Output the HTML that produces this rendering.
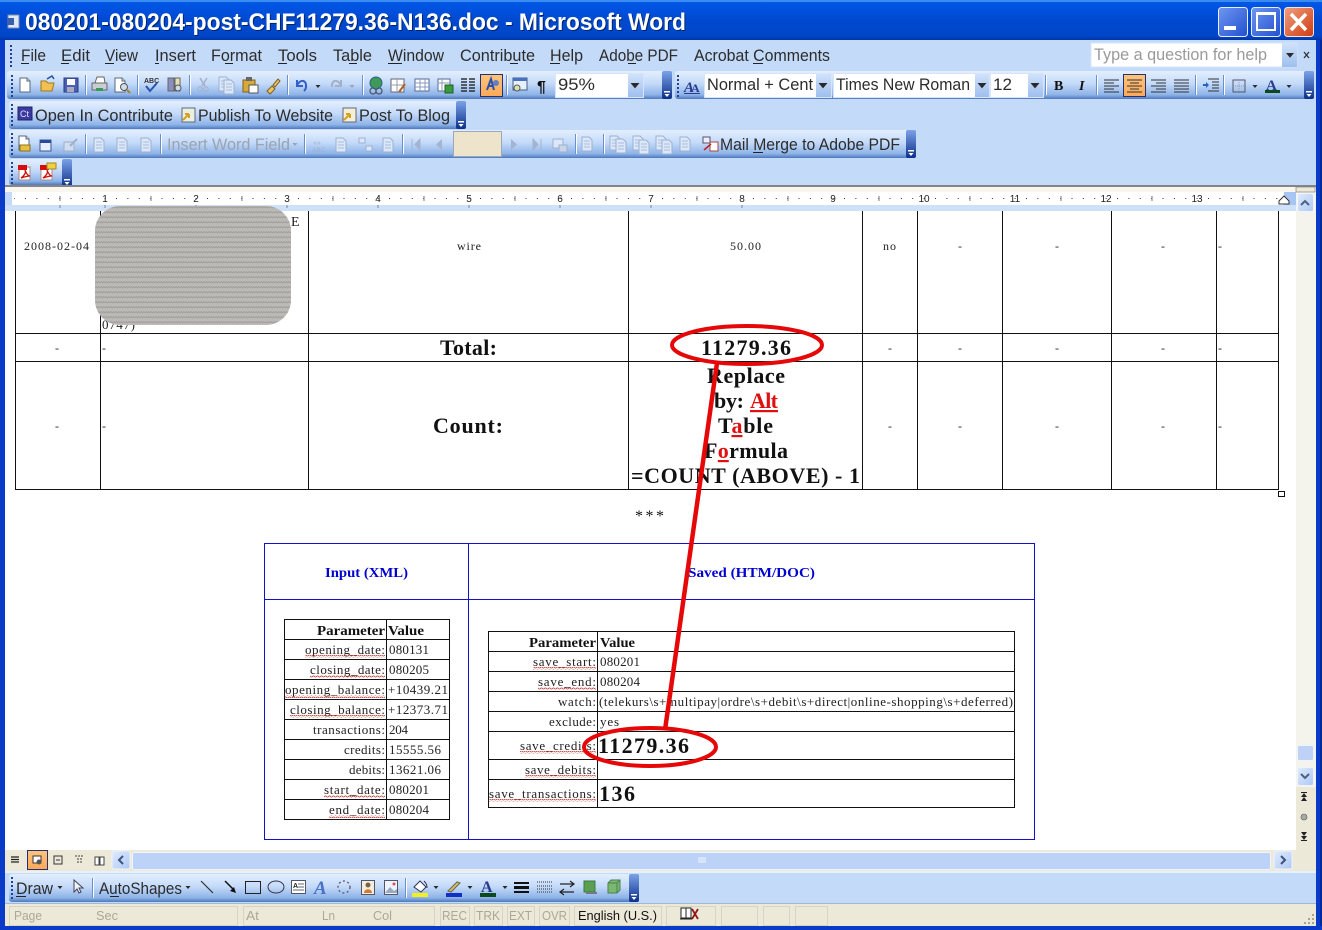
<!DOCTYPE html>
<html><head><meta charset="utf-8"><style>
html,body{margin:0;padding:0;background:#c3daf9;width:1322px;height:930px;overflow:hidden}
svg{display:block}
.u{font-family:"Liberation Sans",sans-serif;font-size:17px;fill:#2c2c2c}
.d{font-family:"Liberation Sans",sans-serif;font-size:17px;fill:#9aa3b0}
.st{font-family:"Liberation Sans",sans-serif;font-size:13px;fill:#aca899}
.s{font-family:"Liberation Serif",serif;font-size:13px;fill:#222}
.b{font-family:"Liberation Serif",serif;font-size:14px;font-weight:bold;fill:#111}
.h{font-family:"Liberation Serif",serif;font-size:22px;font-weight:bold;fill:#111}
.r{font-family:"Liberation Sans",sans-serif;font-size:10px;fill:#222}
</style></head><body>
<svg width="1322" height="930" viewBox="0 0 1322 930" xmlns="http://www.w3.org/2000/svg">
<defs>
<linearGradient id="tb" x1="0" y1="0" x2="0" y2="1"><stop offset="0" stop-color="#0a5ce0"/><stop offset=".12" stop-color="#0055e5"/><stop offset=".5" stop-color="#0049d0"/><stop offset=".9" stop-color="#0046c8"/><stop offset="1" stop-color="#0036a8"/></linearGradient>
<linearGradient id="bar" x1="0" y1="0" x2="0" y2="1"><stop offset="0" stop-color="#e3effe"/><stop offset=".45" stop-color="#c4daf9"/><stop offset=".85" stop-color="#8eb3e8"/><stop offset="1" stop-color="#4d78bd"/></linearGradient>
<linearGradient id="chev" x1="0" y1="0" x2="0" y2="1"><stop offset="0" stop-color="#7ba2e7"/><stop offset="1" stop-color="#0c2f8a"/></linearGradient>
<linearGradient id="drop" x1="0" y1="0" x2="0" y2="1"><stop offset="0" stop-color="#d0e2fb"/><stop offset="1" stop-color="#9ebfee"/></linearGradient>
<linearGradient id="or" x1="0" y1="0" x2="0" y2="1"><stop offset="0" stop-color="#fdc47c"/><stop offset="1" stop-color="#fda858"/></linearGradient>
<linearGradient id="minb" x1="0" y1="0" x2="1" y2="1"><stop offset="0" stop-color="#6f96f0"/><stop offset="1" stop-color="#2150d0"/></linearGradient>
<linearGradient id="closeb" x1="0" y1="0" x2="1" y2="1"><stop offset="0" stop-color="#f0a080"/><stop offset="1" stop-color="#d03a10"/></linearGradient>
<linearGradient id="sbb" x1="0" y1="0" x2="1" y2="1"><stop offset="0" stop-color="#e0ebfd"/><stop offset="1" stop-color="#aec8f4"/></linearGradient>
<pattern id="wave" width="4" height="3" patternUnits="userSpaceOnUse"><path d="M0 2 L1 1 L2 1 L3 2 L4 2" fill="none" stroke="#c8302a" stroke-width=".8"/></pattern>
<pattern id="zig" width="5" height="5" patternUnits="userSpaceOnUse"><path d="M0 3 L1.250 1.500 L2.500 3 L3.750 1.500 L5 3" fill="none" stroke="#a09e9b" stroke-width=".9"/></pattern>
<g id="dn"><path d="M-2.500 0h5l-2.500 3z" fill="#2a2a2a"/></g>
<g id="dnd"><path d="M-2.500 0h5l-2.500 3z" fill="#95a4bd"/></g>
<g id="cv"><rect x="0" y="0" width="10" height="28" rx="2" fill="url(#chev)"/><rect x="2" y="20" width="6" height="1.500" fill="#fff"/><path d="M2.500 23h5l-2.500 3z" fill="#fff"/></g>
<g id="grip" fill="#27418a"><rect x="0" y="0" width="2" height="2"/><rect x="0" y="4" width="2" height="2"/><rect x="0" y="8" width="2" height="2"/><rect x="0" y="12" width="2" height="2"/><rect x="0" y="16" width="2" height="2"/><rect x="0" y="20" width="2" height="2"/></g>
<g id="pg"><path d="M-5-7h7l3 3v11h-10z" fill="#fff" stroke="#5a6a80"/><path d="M2-7v3h3" fill="#d8e2f0" stroke="#5a6a80"/></g>
<g id="pgd"><path d="M-5-7h7l3 3v11h-10z" fill="#dce8fa" stroke="#9db1d0"/><path d="M-3-3h6M-3 0h6M-3 3h6" stroke="#a9bcd8"/></g>
<g id="sep"><rect x="0" y="0" width="1" height="20" fill="#6b8fc9"/><rect x="1" y="0" width="1" height="20" fill="#fff"/></g>
<g id="pdf"><path d="M-6-6h11v13h-11z" fill="#fff" stroke="#a88"/><rect x="-7" y="-8" width="9" height="5" fill="#d80c0c"/><path d="M-4 5C0 2 1-1 0-3 1 0 3 3 5 3 2 3-1 4-4 5z" fill="none" stroke="#d01010" stroke-width="1.300"/></g>
</defs>

<!-- base -->
<rect width="1322" height="930" fill="#c3daf9"/>
<!-- title bar -->
<rect width="1322" height="40" fill="url(#tb)"/>
<rect x="0" y="0" width="1322" height="2" fill="#3a8cf0"/>
<rect x="8" y="15" width="11" height="13" fill="#dfe8f5" stroke="#7a8fb0"/><rect x="7" y="18" width="7" height="7" fill="#3b5fb0"/>
<text x="26" y="31" font-family="Liberation Sans,sans-serif" font-weight="bold" font-size="24" fill="#000" opacity=".5" textLength="661" lengthAdjust="spacingAndGlyphs">080201-080204-post-CHF11279.36-N136.doc - Microsoft Word</text>
<text x="25" y="30" font-family="Liberation Sans,sans-serif" font-weight="bold" font-size="24" fill="#fff" textLength="661" lengthAdjust="spacingAndGlyphs">080201-080204-post-CHF11279.36-N136.doc - Microsoft Word</text>
<rect x="1218.500" y="7.500" width="29" height="29" rx="3" fill="url(#minb)" stroke="#e8eefc"/><rect x="1224" y="26" width="12" height="4" fill="#fff"/>
<rect x="1251.500" y="7.500" width="29" height="29" rx="3" fill="url(#minb)" stroke="#e8eefc"/><rect x="1257" y="13" width="18" height="17" fill="none" stroke="#fff" stroke-width="2"/><rect x="1257" y="12" width="18" height="3" fill="#fff"/>
<rect x="1284.500" y="7.500" width="29" height="29" rx="3" fill="url(#closeb)" stroke="#f4e4dc"/><path d="M1291 14l15 16M1306 14l-15 16" stroke="#fff" stroke-width="3.500"/>
<rect x="0" y="40" width="5" height="890" fill="#0a3bc8"/><rect x="1316" y="40" width="6" height="890" fill="#0a3bc8"/>
<rect x="1320" y="40" width="2" height="890" fill="#002a9a"/>

<!-- menu bar -->
<use href="#grip" x="10" y="45"/>
<g class="u">
<text x="21" y="61" textLength="25" lengthAdjust="spacingAndGlyphs">File</text>
<text x="61" y="61" textLength="29" lengthAdjust="spacingAndGlyphs">Edit</text>
<text x="105" y="61" textLength="33" lengthAdjust="spacingAndGlyphs">View</text>
<text x="155" y="61" textLength="41" lengthAdjust="spacingAndGlyphs">Insert</text>
<text x="211" y="61" textLength="51" lengthAdjust="spacingAndGlyphs">Format</text>
<text x="278" y="61" textLength="39" lengthAdjust="spacingAndGlyphs">Tools</text>
<text x="333" y="61" textLength="39" lengthAdjust="spacingAndGlyphs">Table</text>
<text x="388" y="61" textLength="56" lengthAdjust="spacingAndGlyphs">Window</text>
<text x="460" y="61" textLength="75" lengthAdjust="spacingAndGlyphs">Contribute</text>
<text x="550" y="61" textLength="33" lengthAdjust="spacingAndGlyphs">Help</text>
<text x="599" y="61" textLength="79" lengthAdjust="spacingAndGlyphs">Adobe PDF</text>
<text x="694" y="61" textLength="136" lengthAdjust="spacingAndGlyphs">Acrobat Comments</text>
</g>
<g fill="#222"><rect x="21" y="63" width="8" height="1"/><rect x="61" y="63" width="8" height="1"/><rect x="105" y="63" width="9" height="1"/><rect x="155" y="63" width="4" height="1"/><rect x="225" y="63" width="8" height="1"/><rect x="278" y="63" width="9" height="1"/><rect x="349" y="63" width="8" height="1"/><rect x="388" y="63" width="14" height="1"/><rect x="510" y="63" width="8" height="1"/><rect x="550" y="63" width="10" height="1"/><rect x="628" y="63" width="8" height="1"/><rect x="753" y="63" width="10" height="1"/></g>
<rect x="1091" y="43" width="206" height="24" fill="#fff" stroke="#d6e5fb"/>
<text class="u" x="1094" y="60" style="fill:#9a9a9a" textLength="173" lengthAdjust="spacingAndGlyphs">Type a question for help</text>
<rect x="1282" y="43" width="15" height="24" fill="url(#drop)"/><use href="#dn" transform="translate(1290 53) scale(1.600)"/>
<path d="M1304 52l5 6M1309 52l-5 6" stroke="#333" stroke-width="1.300"/>

<!-- toolbars -->
<rect x="7" y="71" width="665" height="28" rx="3" fill="url(#bar)"/>
<rect x="675" y="71" width="639" height="28" rx="3" fill="url(#bar)"/>
<rect x="9" y="101" width="457" height="28" rx="3" fill="url(#bar)"/>
<rect x="9" y="130" width="907" height="28" rx="3" fill="url(#bar)"/>
<rect x="9" y="159" width="63" height="26" rx="3" fill="url(#bar)"/>
<use href="#cv" x="662" y="71"/><use href="#cv" x="1304" y="71"/><use href="#cv" x="456" y="101"/><use href="#cv" x="906" y="130"/><use href="#cv" x="62" y="159" />
<use href="#grip" x="11" y="75"/><use href="#grip" x="677" y="75"/><use href="#grip" x="11" y="104"/><use href="#grip" x="11" y="133"/><use href="#grip" x="11" y="162"/>

<!-- row 1 icons -->
<use href="#pg" x="25" y="85"/>
<path d="M41 91V81h5l2 2h6l-2 8z" fill="#f0c050" stroke="#a07820"/><path d="M47 79l5-3 2 3" fill="none" stroke="#2050a0" stroke-width="1.500"/>
<rect x="64" y="78" width="14" height="14" fill="#4a60b8" stroke="#2a3a80"/><rect x="67" y="79" width="8" height="6" fill="#fff"/><rect x="67" y="87" width="7" height="5" fill="#aab"/>
<use href="#sep" x="85" y="75"/>
<rect x="92" y="83" width="15" height="7" fill="#c8ccd4" stroke="#666"/><path d="M95 83l2-6h7l1 6z" fill="#fff" stroke="#666"/><rect x="96" y="88" width="7" height="3" fill="#3a9a50"/>
<use href="#pg" x="120" y="85"/><circle cx="124" cy="87" r="3.500" fill="#cde" stroke="#555"/><path d="M127 90l3 3" stroke="#b08020" stroke-width="2"/>
<use href="#sep" x="137" y="75"/>
<text x="144" y="83" font-family="Liberation Sans,sans-serif" font-size="7" font-weight="bold" fill="#333">ABC</text><path d="M146 86l4 5 7-8" fill="none" stroke="#2a50b0" stroke-width="2"/>
<rect x="168" y="78" width="6" height="13" fill="#8a8fc0" stroke="#666"/><rect x="175" y="78" width="5" height="13" fill="#e8e0b0" stroke="#666"/><circle cx="178" cy="88" r="3" fill="#cde" stroke="#555"/>
<use href="#sep" x="189" y="75"/>
<path d="M200 78l5 8M207 78l-5 8" stroke="#a2b0c8" stroke-width="1.500"/><circle cx="200" cy="89" r="2.200" fill="none" stroke="#a2b0c8"/><circle cx="206" cy="89" r="2.200" fill="none" stroke="#a2b0c8"/>
<use href="#pgd" x="224" y="84"/><use href="#pgd" x="229" y="87"/>
<rect x="243" y="80" width="12" height="12" fill="#d8a838" stroke="#806020"/><rect x="246" y="77" width="6" height="4" fill="#666"/><rect x="249" y="85" width="9" height="8" fill="#fff" stroke="#555"/>
<path d="M267 91l5-5 3 3-5 5zM273 85l5-6 2 2-5 6z" fill="#e8c860" stroke="#806020"/>
<use href="#sep" x="287" y="75"/>
<path d="M297 80v6h6M297 86c2-7 10-7 9 1 0 2-1 3-2 4" fill="none" stroke="#3560c8" stroke-width="2"/><use href="#dn" x="318" y="85"/>
<path d="M341 80v6h-6M341 86c-2-7-10-7-9 1" fill="none" stroke="#a2b0c8" stroke-width="2"/><use href="#dnd" x="352" y="85"/>
<use href="#sep" x="362" y="75"/>
<circle cx="376" cy="83" r="6" fill="#3f9a5a" stroke="#27608a"/><path d="M370 91a3 3 0 0 1 6 0a3 3 0 0 1-6 0M376 91a3 3 0 0 1 6 0a3 3 0 0 1-6 0" fill="none" stroke="#4a5a70" stroke-width="1.300"/>
<rect x="391" y="79" width="13" height="13" fill="#fff" stroke="#667"/><path d="M397 79v13M391 85h13" stroke="#99a"/><path d="M399 92l6-8" stroke="#b06020" stroke-width="2"/>
<rect x="415" y="79" width="14" height="12" fill="#fff" stroke="#5a6a90"/><path d="M415 83h14M415 87h14M420 79v12M425 79v12" stroke="#8a9ac0"/>
<rect x="438" y="79" width="12" height="12" fill="#fff" stroke="#5a6a90"/><path d="M438 83h12M442 79v12" stroke="#8a9ac0"/><rect x="445" y="85" width="8" height="8" fill="#3a9a40" stroke="#206020"/>
<path d="M461 79h6M469 79h6M461 82h6M469 82h6M461 85h6M469 85h6M461 88h6M469 88h6M461 91h6M469 91h6" stroke="#111" stroke-width="1.200"/>
<rect x="480.500" y="74.500" width="22" height="22" fill="url(#or)" stroke="#27306e"/><path d="M487 90l4-11 3 11M488 86h5" fill="none" stroke="#2a50b0" stroke-width="2"/><circle cx="496" cy="83" r="3" fill="#6080c0"/>
<use href="#sep" x="506" y="75"/>
<rect x="513" y="78" width="14" height="12" fill="#e8f0fc" stroke="#40608a"/><rect x="513" y="78" width="14" height="3" fill="#4a70c0"/><circle cx="517" cy="88" r="3" fill="#d8e8a0" stroke="#556"/>
<text x="537" y="92" font-family="Liberation Sans,sans-serif" font-size="16" font-weight="bold" fill="#111">¶</text>
<rect x="555.500" y="73.500" width="88" height="24" fill="#fff" stroke="#d6e5fb"/><rect x="628" y="74" width="15" height="23" fill="url(#drop)"/><use href="#dn" transform="translate(635 83) scale(1.800)"/>
<text class="u" x="558" y="90" textLength="37" lengthAdjust="spacingAndGlyphs">95%</text>

<!-- row 1 right -->
<text x="684" y="92" font-family="Liberation Serif,serif" font-size="15" font-style="italic" font-weight="bold" fill="#2a3a90">A</text><text x="691" y="92" font-family="Liberation Serif,serif" font-size="12" font-weight="bold" fill="#2a3a90">A</text><rect x="684" y="93" width="16" height="1" fill="#2a3a90"/>
<rect x="704.500" y="73.500" width="127" height="24" fill="#fff" stroke="#d6e5fb"/><rect x="816" y="74" width="15" height="23" fill="url(#drop)"/><use href="#dn" transform="translate(823 83) scale(1.800)"/>
<text class="u" x="707" y="90" textLength="106" lengthAdjust="spacingAndGlyphs">Normal + Cent</text>
<rect x="833.500" y="73.500" width="156" height="24" fill="#fff" stroke="#d6e5fb"/><rect x="975" y="74" width="14" height="23" fill="url(#drop)"/><use href="#dn" transform="translate(982 83) scale(1.800)"/>
<text class="u" x="836" y="90" textLength="134" lengthAdjust="spacingAndGlyphs">Times New Roman</text>
<rect x="990.500" y="73.500" width="53" height="24" fill="#fff" stroke="#d6e5fb"/><rect x="1028" y="74" width="15" height="23" fill="url(#drop)"/><use href="#dn" transform="translate(1035 83) scale(1.800)"/>
<text class="u" x="993" y="90" textLength="19" lengthAdjust="spacingAndGlyphs">12</text>
<use href="#sep" x="1045" y="75"/>
<text x="1054" y="90" font-family="Liberation Serif,serif" font-size="14" font-weight="bold" fill="#111">B</text>
<text x="1079" y="90" font-family="Liberation Serif,serif" font-size="14" font-weight="bold" font-style="italic" fill="#111">I</text>
<use href="#sep" x="1096" y="75"/>
<path d="M1104 80h15M1104 83h10M1104 86h15M1104 89h10M1104 92h15" stroke="#333"/>
<rect x="1123.500" y="74.500" width="22" height="22" fill="url(#or)" stroke="#27306e"/>
<path d="M1127 80h15M1130 83h9M1127 86h15M1130 89h9M1127 92h15" stroke="#333"/>
<path d="M1151 80h15M1156 83h10M1151 86h15M1156 89h10M1151 92h15" stroke="#333"/>
<path d="M1174 80h15M1174 83h15M1174 86h15M1174 89h15M1174 92h15" stroke="#333"/>
<use href="#sep" x="1195" y="75"/>
<path d="M1208 79h11M1212 82h7M1212 85h7M1212 88h7M1208 91h11" stroke="#333"/><path d="M1203 85h5" stroke="#2a60c0" stroke-width="2"/><path d="M1206 82l3 3-3 3z" fill="#2a60c0"/>
<use href="#sep" x="1223" y="75"/>
<rect x="1233" y="80" width="12" height="12" fill="none" stroke="#556"/><path d="M1239 80v12M1233 86h12" stroke="#99a" stroke-dasharray="1 1"/><use href="#dn" x="1255" y="85"/>
<text x="1266" y="90" font-family="Liberation Serif,serif" font-size="15" font-weight="bold" fill="#2a3a90">A</text><rect x="1265" y="90" width="15" height="3" fill="#0c4a1c"/><use href="#dn" x="1289" y="85"/>

<!-- row 2 -->
<rect x="18" y="107" width="14" height="13" fill="#3a3aa0" stroke="#22226a"/><text x="20" y="117" font-family="Liberation Sans,sans-serif" font-size="9" fill="#dfe4ff">Ct</text>
<text class="u" x="35" y="121" textLength="138" lengthAdjust="spacingAndGlyphs">Open In Contribute</text>
<rect x="182" y="108" width="13" height="14" fill="#e8f0e0" stroke="#667"/><path d="M183 120l6-6M189 114v4M189 114h-4" stroke="#d8a020" stroke-width="2" fill="none"/>
<text class="u" x="198" y="121" textLength="135" lengthAdjust="spacingAndGlyphs">Publish To Website</text>
<rect x="343" y="108" width="13" height="14" fill="#f4f0d8" stroke="#667"/><path d="M344 120l6-6M350 114v4M350 114h-4" stroke="#d8a020" stroke-width="2" fill="none"/>
<text class="u" x="359" y="121" textLength="91" lengthAdjust="spacingAndGlyphs">Post To Blog</text>

<!-- row 3 -->
<use href="#pg" x="24" y="143"/><path d="M20 151v-6h10v6z" fill="#e8c040" stroke="#907020"/>
<rect x="40" y="140" width="11" height="11" fill="#e8eefc" stroke="#3a5a9a"/><rect x="40" y="140" width="11" height="3" fill="#2a4a9a"/>
<rect x="64" y="142" width="10" height="9" fill="#d0dcf0" stroke="#a0b0c8"/><path d="M70 146l7-7" stroke="#a2b0c8" stroke-width="2"/>
<use href="#sep" x="85" y="134"/><use href="#pgd" x="99" y="145"/><use href="#pgd" x="122" y="145"/><use href="#pgd" x="146" y="145"/><use href="#sep" x="160" y="134"/>
<text class="d" x="167" y="150" textLength="123" lengthAdjust="spacingAndGlyphs">Insert Word Field</text><use href="#dnd" x="295" y="143"/>
<use href="#sep" x="304" y="134"/>
<text x="312" y="152" font-family="Liberation Sans,sans-serif" font-size="6.500" fill="#9cafcc">ABC</text><text x="313" y="145" font-family="Liberation Sans,sans-serif" font-size="7" fill="#9cafcc">«»</text>
<use href="#pgd" x="341" y="145"/>
<rect x="359" y="138" width="6" height="5" fill="#dce8fa" stroke="#9db1d0"/><rect x="366" y="146" width="6" height="5" fill="#dce8fa" stroke="#9db1d0"/>
<use href="#pgd" x="388" y="145"/><use href="#sep" x="402" y="134"/>
<path d="M412 139v11M415 144.500l5-5.500v11z" fill="#a2b4d0" stroke="#a2b4d0"/><path d="M436 144.500l6-5.500v11z" fill="#a2b4d0"/>
<rect x="453.500" y="131.500" width="48" height="25" fill="#eee3cb" stroke="#9ba8bc"/>
<path d="M511 139l6 5.500-6 5.500z" fill="#a2b4d0"/><path d="M533 139l5 5.500-5 5.500zM541 139v11" fill="#a2b4d0" stroke="#a2b4d0"/>
<rect x="553" y="139" width="10" height="9" fill="#dce8fa" stroke="#9db1d0"/><rect x="559" y="145" width="8" height="7" fill="#c8d4e8" stroke="#9db1d0"/>
<use href="#sep" x="575" y="134"/><use href="#pgd" x="587" y="144"/><use href="#sep" x="603" y="134"/>
<use href="#pgd" x="615" y="143"/><use href="#pgd" x="621" y="146"/><use href="#pgd" x="638" y="143"/><use href="#pgd" x="644" y="147"/><use href="#pgd" x="661" y="143"/><use href="#pgd" x="667" y="147"/><use href="#pgd" x="685" y="144"/>
<rect x="703" y="137" width="7" height="6" fill="#eef" stroke="#556"/><rect x="710" y="142" width="8" height="9" fill="#fff" stroke="#a44"/><path d="M704 150l7-6" stroke="#c02020" stroke-width="1.500"/>
<text class="u" x="720" y="150" textLength="180" lengthAdjust="spacingAndGlyphs">Mail Merge to Adobe PDF</text>
<rect x="753" y="152" width="10" height="1" fill="#222"/>

<!-- row 4 -->
<use href="#pdf" x="25" y="173"/><use href="#pdf" x="47" y="173"/><rect x="47" y="163" width="9" height="6" fill="#f0d040" stroke="#a08820"/>

<!-- separator + ruler -->
<rect x="5" y="185" width="1311" height="2" fill="#858585"/>
<rect x="5" y="187" width="1311" height="5" fill="#f8f6ee"/>
<rect x="5" y="192" width="7" height="19" fill="#c3daf9"/>
<rect x="12" y="192" width="1272" height="13" fill="#fff"/>
<rect x="5" y="205" width="1291" height="6" fill="#cfe0f9"/>
<rect x="1284" y="192" width="12" height="13" fill="#a6c5f2"/>
<g class="r" text-anchor="middle"><text x="105" y="202">1</text><text x="196" y="202">2</text><text x="287" y="202">3</text><text x="378" y="202">4</text><text x="469" y="202">5</text><text x="560" y="202">6</text><text x="651" y="202">7</text><text x="742" y="202">8</text><text x="833" y="202">9</text><text x="924" y="202">10</text><text x="1015" y="202">11</text><text x="1106" y="202">12</text><text x="1197" y="202">13</text></g>
<path d="M14 198.500H1282" stroke="#333" stroke-width="1" stroke-dasharray="1 10.375" stroke-dashoffset="-11"/>
<path d="M60 196v5M151 196v5M242 196v5M333 196v5M424 196v5M515 196v5M606 196v5M697 196v5M788 196v5M879 196v5M970 196v5M1061 196v5M1152 196v5M1243 196v5" stroke="#777"/>
<path d="M1279 204v-3l5-5 5 5v3z" fill="#fff" stroke="#333"/>
<path d="M60 205v3M105 205v3M196 205v3M287 205v3M378 205v3M469 205v3M560 205v3M651 205v3M742 205v3" stroke="#789"/>

<!-- document -->
<rect x="5" y="211" width="1291" height="639" fill="#fff"/>
<g stroke="#111" stroke-width="1" fill="none">
<path d="M15.500 211V489.500H1278.500V211"/>
<path d="M15 333.500H1279M15 361.500H1279"/>
<path d="M100.500 211V489M308.500 211V489M628.500 211V489M862.500 211V489M917.500 211V489M1002.500 211V489M1111.500 211V489M1216.500 211V489"/>
</g>
<rect x="1278.500" y="491.500" width="6" height="5" fill="#fff" stroke="#111"/>
<g class="s" style="font-size:12px">
<text x="24" y="250" textLength="65" lengthAdjust="spacing">2008-02-04</text>
<text x="457" y="250" textLength="24" lengthAdjust="spacing">wire</text>
<text x="730" y="250" textLength="31" lengthAdjust="spacing">50.00</text>
<text x="883" y="250" textLength="13" lengthAdjust="spacing">no</text>
<text x="958" y="250">-</text><text x="1055" y="250">-</text><text x="1161" y="250">-</text><text x="1218" y="250">-</text>
<text x="55" y="352">-</text><text x="102" y="352">-</text><text x="888" y="352">-</text><text x="958" y="352">-</text><text x="1055" y="352">-</text><text x="1161" y="352">-</text><text x="1218" y="352">-</text>
<text x="55" y="430">-</text><text x="102" y="430">-</text><text x="888" y="430">-</text><text x="958" y="430">-</text><text x="1055" y="430">-</text><text x="1161" y="430">-</text><text x="1218" y="430">-</text>
<text x="291" y="226" style="font-size:14px">E</text>
<text x="102" y="329" textLength="33" lengthAdjust="spacing" style="font-size:13px">0747)</text>
</g>
<g class="h">
<text x="440" y="355" textLength="57" lengthAdjust="spacing">Total:</text>
<text x="701" y="355" textLength="90" lengthAdjust="spacing">11279.36</text>
<text x="433" y="433" textLength="70" lengthAdjust="spacing">Count:</text>
<text x="707" y="383" textLength="78" lengthAdjust="spacing">Replace</text>
<text x="714" y="408" textLength="30" lengthAdjust="spacing">by:</text>
<text x="750" y="408" textLength="28" lengthAdjust="spacing" style="fill:#e01010;text-decoration:underline">Alt</text>
<text x="718" y="433" textLength="55" lengthAdjust="spacing">T<tspan fill="#e01010" text-decoration="underline">a</tspan>ble</text>
<text x="704" y="458" textLength="84" lengthAdjust="spacing">F<tspan fill="#e01010" text-decoration="underline">o</tspan>rmula</text>
<text x="631" y="483" textLength="229" lengthAdjust="spacing">=COUNT (ABOVE) - 1</text>
<text x="635" y="521" textLength="29" lengthAdjust="spacing" style="font-size:16px;font-weight:normal">* * *</text>
</g>
<rect x="95" y="206" width="196" height="119" rx="25" fill="#bcbab7"/>
<rect x="95" y="206" width="196" height="119" rx="25" fill="url(#zig)"/>

<!-- blue table -->
<g stroke="#1111c8" fill="none"><rect x="264.500" y="543.500" width="770" height="296"/><path d="M264 599.500H1034M468.500 543V839"/></g>
<text class="b" x="325" y="577" style="fill:#0000d0" textLength="83" lengthAdjust="spacingAndGlyphs">Input (XML)</text>
<text class="b" x="688" y="577" style="fill:#0000d0" textLength="127" lengthAdjust="spacingAndGlyphs">Saved (HTM/DOC)</text>

<!-- param table 1 -->
<g stroke="#111" fill="none"><rect x="284.500" y="619.500" width="165" height="200"/><path d="M386.500 619V819M284 639.500H449M284 659.500H449M284 679.500H449M284 699.500H449M284 719.500H449M284 739.500H449M284 759.500H449M284 779.500H449M284 799.500H449"/></g>
<text class="b" x="317" y="635" textLength="68" lengthAdjust="spacingAndGlyphs">Parameter</text><text class="b" x="388" y="635" textLength="36" lengthAdjust="spacingAndGlyphs">Value</text>
<g class="s">
<text x="305" y="654" textLength="80" lengthAdjust="spacing">opening_date:</text><text x="389" y="654" textLength="40" lengthAdjust="spacing">080131</text>
<text x="310" y="674" textLength="75" lengthAdjust="spacing">closing_date:</text><text x="389" y="674" textLength="40" lengthAdjust="spacing">080205</text>
<text x="285" y="694" textLength="100" lengthAdjust="spacing">opening_balance:</text><text x="388" y="694" textLength="60" lengthAdjust="spacing">+10439.21</text>
<text x="290" y="714" textLength="95" lengthAdjust="spacing">closing_balance:</text><text x="388" y="714" textLength="60" lengthAdjust="spacing">+12373.71</text>
<text x="313" y="734" textLength="72" lengthAdjust="spacing">transactions:</text><text x="389" y="734" textLength="19" lengthAdjust="spacing">204</text>
<text x="344" y="754" textLength="41" lengthAdjust="spacing">credits:</text><text x="389" y="754" textLength="52" lengthAdjust="spacing">15555.56</text>
<text x="349" y="774" textLength="36" lengthAdjust="spacing">debits:</text><text x="389" y="774" textLength="52" lengthAdjust="spacing">13621.06</text>
<text x="324" y="794" textLength="61" lengthAdjust="spacing">start_date:</text><text x="389" y="794" textLength="40" lengthAdjust="spacing">080201</text>
<text x="329" y="814" textLength="56" lengthAdjust="spacing">end_date:</text><text x="389" y="814" textLength="40" lengthAdjust="spacing">080204</text>
</g>
<g fill="url(#wave)"><rect x="305" y="655" width="80" height="3"/><rect x="310" y="675" width="75" height="3"/><rect x="285" y="695" width="100" height="3"/><rect x="290" y="715" width="95" height="3"/><rect x="324" y="795" width="61" height="3"/><rect x="329" y="815" width="56" height="3"/></g>

<!-- param table 2 -->
<g stroke="#111" fill="none"><rect x="488.500" y="631.500" width="526" height="176"/><path d="M597.500 631V807M488 651.500H1014M488 671.500H1014M488 691.500H1014M488 711.500H1014M488 731.500H1014M488 759.500H1014M488 779.500H1014"/></g>
<text class="b" x="529" y="647" textLength="67" lengthAdjust="spacingAndGlyphs">Parameter</text><text class="b" x="600" y="647" textLength="35" lengthAdjust="spacingAndGlyphs">Value</text>
<g class="s">
<text x="533" y="666" textLength="63" lengthAdjust="spacing">save_start:</text><text x="600" y="666" textLength="40" lengthAdjust="spacing">080201</text>
<text x="538" y="686" textLength="58" lengthAdjust="spacing">save_end:</text><text x="600" y="686" textLength="40" lengthAdjust="spacing">080204</text>
<text x="558" y="706" textLength="38" lengthAdjust="spacing">watch:</text><text x="599" y="706" textLength="414" lengthAdjust="spacing">(telekurs\s+multipay|ordre\s+debit\s+direct|online-shopping\s+deferred)</text>
<text x="549" y="726" textLength="47" lengthAdjust="spacing">exclude:</text><text x="600" y="726" textLength="19" lengthAdjust="spacing">yes</text>
<text x="520" y="750" textLength="76" lengthAdjust="spacing">save_credits:</text>
<text x="525" y="774" textLength="71" lengthAdjust="spacing">save_debits:</text>
<text x="489" y="798" textLength="107" lengthAdjust="spacing">save_transactions:</text>
</g>
<g fill="url(#wave)"><rect x="533" y="667" width="63" height="3"/><rect x="538" y="687" width="58" height="3"/><rect x="520" y="751" width="76" height="3"/><rect x="525" y="775" width="71" height="3"/><rect x="489" y="799" width="107" height="3"/></g>
<text class="h" x="598" y="753" textLength="91" lengthAdjust="spacing">11279.36</text>
<text class="h" x="599" y="801" textLength="36" lengthAdjust="spacing">136</text>

<!-- red annotations -->
<g fill="none" stroke="#e60808">
<ellipse cx="747" cy="345" rx="75" ry="19" stroke-width="4"/>
<ellipse cx="650" cy="747" rx="66" ry="19" stroke-width="4"/>
<path d="M717 363L665 730" stroke-width="4.500"/>
</g>

<!-- vertical scrollbar -->
<rect x="1296" y="187" width="20" height="600" fill="#f4f3ec"/>
<rect x="1296" y="187" width="19" height="5" fill="#ece9d8" stroke="#777" stroke-width=".6"/>
<rect x="1297.500" y="193.500" width="16" height="18" rx="2" fill="url(#sbb)" stroke="#f0f4fc"/><path d="M1301 205l4-4 4 4" fill="none" stroke="#4d6185" stroke-width="2"/>
<rect x="1297.500" y="745.500" width="16" height="15" rx="2" fill="#bdd2f6" stroke="#eef3fc"/>
<rect x="1297.500" y="767.500" width="16" height="18" rx="2" fill="url(#sbb)" stroke="#f0f4fc"/><path d="M1301 774l4 4 4-4" fill="none" stroke="#4d6185" stroke-width="2"/>
<rect x="1296" y="787" width="20" height="65" fill="#ece9d8"/>
<path d="M1304 793l-3 4h6zM1304 797l-3 4h6z" fill="#222" stroke="none"/><rect x="1301" y="792" width="6" height="1" fill="#222"/>
<circle cx="1304" cy="817" r="3" fill="#aaa" stroke="#555" stroke-width=".6"/>
<path d="M1301 832l3 4 3-4zM1301 836l3 4 3-4z" fill="#222"/><rect x="1301" y="840" width="6" height="1" fill="#222"/>

<!-- horizontal scrollbar -->
<rect x="5" y="850" width="1311" height="21" fill="#ece9d8"/>
<g fill="none" stroke="#222"><path d="M11 857h8M11 859.500h8M11 862h8" stroke-width="1.200"/></g>
<rect x="27.500" y="850.500" width="20" height="19" fill="url(#or)" stroke="#27306e"/><rect x="33" y="856" width="8" height="7" fill="#fff" stroke="#333"/><circle cx="39" cy="862" r="2.500" fill="#555"/>
<rect x="54" y="856" width="8" height="8" fill="none" stroke="#333"/><path d="M56 860h4" stroke="#333"/>
<path d="M75 856h8M77 859h6M77 862h6" stroke="#444" stroke-dasharray="2 1"/>
<path d="M95 857h4v8h-4zM100 857h4v8h-4z" fill="#fff" stroke="#444"/>
<rect x="112" y="851" width="18" height="18" rx="2" fill="url(#sbb)" stroke="#f0f4fc"/><path d="M123 856l-4 4 4 4" fill="none" stroke="#3c5480" stroke-width="2"/>
<rect x="132.500" y="852.500" width="1138" height="17" rx="2" fill="#bdd2f7" stroke="#f0f4fc"/>
<path d="M699 857v6M701 857v6M703 857v6M705 857v6" stroke="#f0f4fc"/>
<rect x="1274" y="851" width="18" height="18" rx="2" fill="url(#sbb)" stroke="#f0f4fc"/><path d="M1281 856l4 4-4 4" fill="none" stroke="#3c5480" stroke-width="2"/>
<rect x="5" y="871" width="1311" height="2" fill="#e8f0fc"/>
<rect x="5" y="873" width="1311" height="30" fill="#c3daf9"/>

<!-- draw toolbar -->
<rect x="9" y="874" width="630" height="28" rx="3" fill="url(#bar)"/>
<use href="#cv" x="629" y="874"/><use href="#grip" x="11" y="877"/>
<text class="u" x="16" y="894" textLength="37" lengthAdjust="spacingAndGlyphs">Draw</text><rect x="16" y="896" width="10" height="1" fill="#222"/><use href="#dn" x="60" y="886"/>
<path d="M74 880v12l3-3 2 4 2-1-2-4h4z" fill="#eef3fb" stroke="#445"/>
<use href="#sep" x="92" y="878"/>
<text class="u" x="99" y="894" textLength="83" lengthAdjust="spacingAndGlyphs">AutoShapes</text><rect x="110" y="896" width="9" height="1" fill="#222"/><use href="#dn" x="188" y="886"/>
<path d="M201 881l12 12" stroke="#333" stroke-width="1.200"/>
<path d="M225 881l9 9" stroke="#111" stroke-width="1.500"/><path d="M236 893l-6-2 4-4z" fill="#111"/>
<rect x="245.500" y="881.500" width="15" height="12" fill="none" stroke="#222"/>
<ellipse cx="276" cy="887" rx="8" ry="6" fill="none" stroke="#334"/>
<rect x="291.500" y="880.500" width="14" height="13" fill="#fff" stroke="#556"/><path d="M298 884h6M298 887h6M293 890h11" stroke="#667"/><text x="293" y="888" font-family="Liberation Sans,sans-serif" font-size="7" font-weight="bold" fill="#222">A</text>
<text x="314" y="894" font-family="Liberation Serif,serif" font-size="19" font-weight="bold" font-style="italic" fill="#4a70c8">A</text>
<circle cx="344" cy="887" r="6" fill="none" stroke="#667" stroke-dasharray="2 2.500" stroke-width="1.500"/>
<rect x="361.500" y="880.500" width="13" height="14" fill="#f0eee0" stroke="#556"/><circle cx="368" cy="885" r="2.500" fill="#806040"/><path d="M364 893c0-5 8-5 8 0" fill="#d87830"/>
<rect x="384.500" y="880.500" width="13" height="14" fill="#eef4ff" stroke="#556"/><path d="M385 893l5-6 4 4 3-2v4z" fill="#9ab"/><circle cx="394" cy="884" r="1.500" fill="#e05050"/>
<use href="#sep" x="405" y="878"/>
<path d="M414 887l6-6 6 6-5 5z" fill="#fff" stroke="#335"/><path d="M424 881c3 3 3 5 3 7" fill="none" stroke="#335"/><rect x="412" y="893" width="16" height="4" fill="#f4f020"/><use href="#dn" x="436" y="886"/>
<path d="M448 891l9-9 3 1-9 9z" fill="#d8c070" stroke="#664"/><rect x="446" y="893" width="16" height="4" fill="#1030c8"/><use href="#dn" x="470" y="886"/>
<text x="481" y="892" font-family="Liberation Serif,serif" font-size="16" font-weight="bold" fill="#2a3a90">A</text><rect x="480" y="893" width="16" height="4" fill="#0c4a1c"/><use href="#dn" x="505" y="886"/>
<rect x="514" y="882" width="15" height="2" fill="#111"/><rect x="514" y="886" width="15" height="3" fill="#111"/><rect x="514" y="891" width="15" height="2" fill="#111"/>
<path d="M537 882h15M537 886h15M537 889h15M537 892h15" stroke="#333" stroke-dasharray="1 1"/>
<path d="M560 884h14M570 881l4 3-4 3M560 892h14M564 889l-4 3 4 3" fill="none" stroke="#222" stroke-width="1.200"/>
<rect x="584" y="881" width="11" height="11" fill="#5aa050" stroke="#3a7a40"/><rect x="586" y="892" width="11" height="2" fill="#778"/>
<path d="M608 883l3-3h9v10l-3 3h-9z" fill="#7ab870" stroke="#4a8050"/><path d="M608 883h9v10M617 883l3-3" fill="none" stroke="#4a8050"/>

<!-- status bar -->
<rect x="5" y="903" width="1311" height="23" fill="#ece9d8"/>
<rect x="5" y="903" width="1311" height="1" fill="#a0b8d8"/>
<g fill="none" stroke="#d8d4c0"><rect x="9.500" y="906.500" width="228" height="19"/><rect x="243.500" y="906.500" width="191" height="19"/><rect x="440.500" y="906.500" width="29" height="19"/><rect x="474.500" y="906.500" width="28" height="19"/><rect x="507.500" y="906.500" width="27" height="19"/><rect x="539.500" y="906.500" width="30" height="19"/><rect x="574.500" y="906.500" width="87" height="19"/><rect x="666.500" y="906.500" width="49" height="19"/><rect x="721.500" y="906.500" width="36" height="19"/><rect x="763.500" y="906.500" width="26" height="19"/><rect x="795.500" y="906.500" width="32" height="19"/></g>
<g class="st">
<text x="14" y="920" textLength="28" lengthAdjust="spacingAndGlyphs">Page</text>
<text x="96" y="920" textLength="22" lengthAdjust="spacingAndGlyphs">Sec</text>
<text x="246" y="920" textLength="13" lengthAdjust="spacingAndGlyphs">At</text>
<text x="322" y="920" textLength="13" lengthAdjust="spacingAndGlyphs">Ln</text>
<text x="373" y="920" textLength="19" lengthAdjust="spacingAndGlyphs">Col</text>
<text x="442" y="920" textLength="25" lengthAdjust="spacingAndGlyphs">REC</text>
<text x="476" y="920" textLength="24" lengthAdjust="spacingAndGlyphs">TRK</text>
<text x="509" y="920" textLength="23" lengthAdjust="spacingAndGlyphs">EXT</text>
<text x="542" y="920" textLength="25" lengthAdjust="spacingAndGlyphs">OVR</text>
<text x="578" y="920" textLength="79" lengthAdjust="spacingAndGlyphs" style="fill:#111">English (U.S.)</text>
</g>
<path d="M681 908h5v10h-5zM686 908h5v10h-5zM680 919h12" fill="#fff" stroke="#222"/><path d="M692 909l6 10M698 909l-6 10" stroke="#901818" stroke-width="1.800"/>
<g fill="#a8a48e"><rect x="1312" y="914" width="2" height="2"/><rect x="1308" y="918" width="2" height="2"/><rect x="1312" y="918" width="2" height="2"/><rect x="1304" y="922" width="2" height="2"/><rect x="1308" y="922" width="2" height="2"/><rect x="1312" y="922" width="2" height="2"/></g>
<rect x="0" y="926" width="1322" height="4" fill="#0a3bc8"/>
</svg>
</body></html>
